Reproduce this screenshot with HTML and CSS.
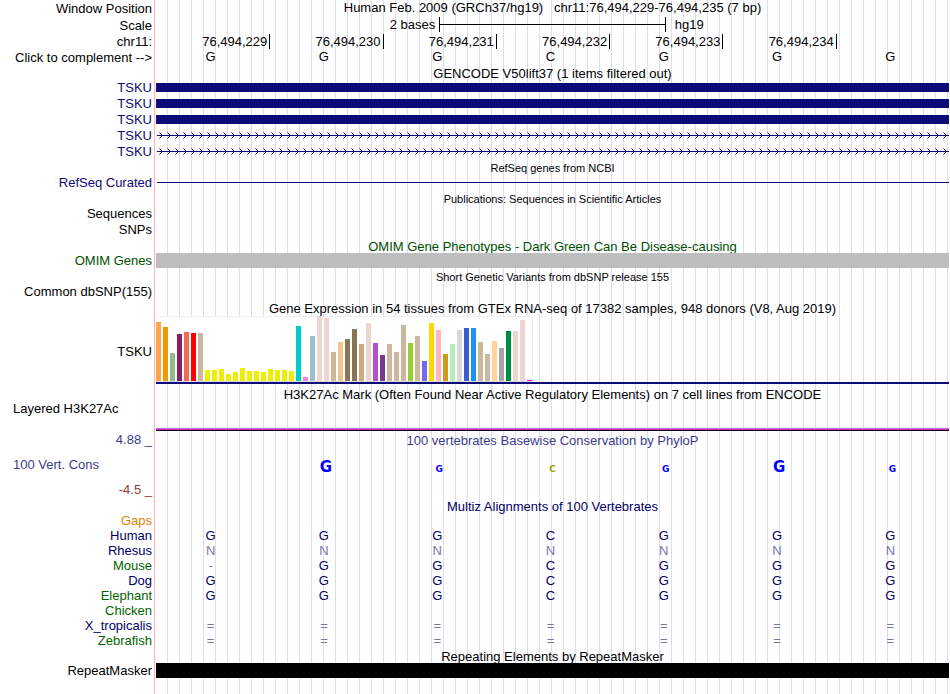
FILE: index.html
```html
<!DOCTYPE html>
<html lang="en">
<head>
    <meta charset="UTF-8">
    <meta name="viewport" content="width=device-width, initial-scale=1.0">
    <title>Human chr11:76,494,229-76,494,235 Genome Browser</title>
    <link rel="stylesheet" href="styles.css">
</head>
<body>
    <main class="browser">
        <div class="track tall nudged">
            <div class="label">Window Position</div>
            <div class="position">Human Feb. 2009 (GRCh37/hg19) &nbsp; chr11:76,494,229-76,494,235 (7 bp)</div>
        </div>
        <div class="track tall nudged">
            <div class="label">Scale</div>
            <div class="scale">
                <span class="scale-size">2 bases</span>
                <span class="scale-bar"><span class="scale-line"></span></span>
                <span class="scale-db">hg19</span>
            </div>
        </div>
        <div class="track">
            <div class="label">chr11:</div>
            <div class="ruler">
                <span>76,494,229</span>
                <span>76,494,230</span>
                <span>76,494,231</span>
                <span>76,494,232</span>
                <span>76,494,233</span>
                <span>76,494,234</span>
                <span></span>
            </div>
        </div>
        <div class="track medium nudged">
            <div class="label">Click to complement --&gt;</div>
            <div class="bases">
                <span>G</span><span>G</span><span>G</span><span>C</span><span>G</span><span>G</span><span>G</span>
            </div>
        </div>

        <!-- GENCODE -->
        <h2 class="title">GENCODE V50lift37 (1 items filtered out)</h2>
        <div class="track medium navy">
            <div class="label">TSKU</div>
            <div class="exon"></div>
        </div>
        <div class="track medium navy">
            <div class="label">TSKU</div>
            <div class="exon"></div>
        </div>
        <div class="track medium navy">
            <div class="label">TSKU</div>
            <div class="exon"></div>
        </div>
        <div class="track medium navy">
            <div class="label">TSKU</div>
            <svg class="intron" aria-hidden="true">
                <defs>
                    <pattern id="chevrons" x="3" y="4" width="8" height="7" patternUnits="userSpaceOnUse">
                        <path d="M0 0h1v1h-1z M0 6h1v1h-1z" fill="#0c0c78" opacity=".5"/>
                        <path d="M1 1h1v1h-1z M2 2h1v1h-1z M2 4h1v1h-1z M1 5h1v1h-1z M3 3h1v1h-1z" fill="#0c0c78"/>
                    </pattern>
                </defs>
                <rect x="1" y="4" width="100%" height="7" fill="url(#chevrons)"/>
                <rect x="1" y="7" width="100%" height="1" fill="#0c0c78"/>
            </svg>
        </div>
        <div class="track medium navy">
            <div class="label">TSKU</div>
            <svg class="intron" aria-hidden="true">
                <rect x="1" y="4" width="100%" height="7" fill="url(#chevrons)"/>
                <rect x="1" y="7" width="100%" height="1" fill="#0c0c78"/>
            </svg>
        </div>

        <!-- RefSeq, publications, OMIM, dbSNP -->
        <h2 class="title small">RefSeq genes from NCBI</h2>
        <div class="track medium navy">
            <div class="label">RefSeq Curated</div>
            <div class="thin-line"></div>
        </div>
        <h2 class="title small">Publications: Sequences in Scientific Articles</h2>
        <div class="track medium">
            <div class="label">Sequences</div>
        </div>
        <div class="track medium">
            <div class="label">SNPs</div>
        </div>
        <h2 class="title omim">OMIM Gene Phenotypes - Dark Green Can Be Disease-causing</h2>
        <div class="track medium omim">
            <div class="label">OMIM Genes</div>
            <div class="block gray"></div>
        </div>
        <h2 class="title small">Short Genetic Variants from dbSNP release 155</h2>
        <div class="track medium">
            <div class="label">Common dbSNP(155)</div>
        </div>

        <!-- GTEx -->
        <h2 class="title">Gene Expression in 54 tissues from GTEx RNA-seq of 17382 samples, 948 donors (V8, Aug 2019)</h2>
        <div class="track gtex">
            <div class="label">TSKU</div>
            <div class="gtex-data">
                <div class="gtex-chart" id="gtex-chart"></div>
            </div>
        </div>

        <h2 class="title spaced">H3K27Ac Mark (Often Found Near Active Regulatory Elements) on 7 cell lines from ENCODE</h2>
        <div class="track histone">
            <div class="label left">Layered H3K27Ac</div>
            <div class="histone-signal"></div>
        </div>

        <!-- Conservation -->
        <div class="track conservation">
            <div class="cons-labels">
                <div class="label">4.88 _</div>
                <div class="label left">100 Vert. Cons</div>
                <div class="label negative">-4.5 _</div>
            </div>
            <div class="cons-data">
                <h2 class="cons-title">100 vertebrates Basewise Conservation by PhyloP</h2>
                <div class="logo">
                    <span></span>
                    <span class="high">G</span>
                    <span class="low">G</span>
                    <span class="low olive">C</span>
                    <span class="low">G</span>
                    <span class="high">G</span>
                    <span class="low">G</span>
                </div>
            </div>
        </div>

        <h2 class="title align-title">Multiz Alignments of 100 Vertebrates</h2>
        <table class="alignment">
            <colgroup><col class="species"><col span="7"></colgroup>
            <tbody>
                <tr class="gaps"><th scope="row">Gaps</th><td></td><td></td><td></td><td></td><td></td><td></td><td></td></tr>
                <tr><th scope="row">Human</th><td>G</td><td>G</td><td>G</td><td>C</td><td>G</td><td>G</td><td>G</td></tr>
                <tr class="faint"><th scope="row">Rhesus</th><td>N</td><td>N</td><td>N</td><td>N</td><td>N</td><td>N</td><td>N</td></tr>
                <tr class="green"><th scope="row">Mouse</th><td class="gap">-</td><td>G</td><td>G</td><td>C</td><td>G</td><td>G</td><td>G</td></tr>
                <tr><th scope="row">Dog</th><td>G</td><td>G</td><td>G</td><td>C</td><td>G</td><td>G</td><td>G</td></tr>
                <tr class="green"><th scope="row">Elephant</th><td>G</td><td>G</td><td>G</td><td>C</td><td>G</td><td>G</td><td>G</td></tr>
                <tr class="green"><th scope="row">Chicken</th><td></td><td></td><td></td><td></td><td></td><td></td><td></td></tr>
                <tr class="faint"><th scope="row">X_tropicalis</th><td>=</td><td>=</td><td>=</td><td>=</td><td>=</td><td>=</td><td>=</td></tr>
                <tr class="green faint"><th scope="row">Zebrafish</th><td>=</td><td>=</td><td>=</td><td>=</td><td>=</td><td>=</td><td>=</td></tr>
            </tbody>
        </table>

        <h2 class="title">Repeating Elements by RepeatMasker</h2>
        <div class="track">
            <div class="label">RepeatMasker</div>
            <div class="block black"></div>
        </div>
    </main>

    <script>
        // [bar height in px, tissue color]
        const tissues = [
            [59, '#ffa54f'], [54, '#ee9a00'], [28, '#8fbc8f'], [47, '#8b1c62'], [49, '#ee6a50'], [48, '#ff0000'],
            [48, '#cdb79e'], [11, '#eeee00'], [11, '#eeee00'], [12, '#eeee00'], [7, '#eeee00'], [9, '#eeee00'],
            [13, '#eeee00'], [10, '#eeee00'], [10, '#eeee00'], [9, '#eeee00'], [12, '#eeee00'], [11, '#eeee00'],
            [11, '#eeee00'], [10, '#eeee00'], [55, '#00cdcd'], [4, '#ee82ee'], [45, '#9ac0cd'], [65, '#eed5d2'],
            [63, '#eed5d2'], [29, '#cdb79e'], [39, '#eec591'], [42, '#8b7355'], [52, '#8b7355'], [37, '#cdaa7d'],
            [58, '#eed5d2'], [38, '#b452cd'], [26, '#7a378b'], [37, '#cdb79e'], [29, '#cdb79e'], [56, '#cdb79e'],
            [38, '#9acd32'], [45, '#cdb79e'], [20, '#7a67ee'], [58, '#ffd700'], [51, '#ffb6c1'], [27, '#cd9b1d'],
            [37, '#b4eeb4'], [51, '#d9d9d9'], [53, '#3a5fcd'], [53, '#1e90ff'], [39, '#cdb79e'], [27, '#cdb79e'],
            [40, '#ffd39b'], [33, '#a6a6a6'], [50, '#008b45'], [50, '#eed5d2'], [61, '#eed5d2'], [1, '#ff00ff']
        ];
        const chart = document.getElementById('gtex-chart');

        tissues.forEach(([height, color]) => {
            const bar = document.createElement('span');
            bar.className = 'gtex-bar';
            bar.style.height = height + 'px';
            bar.style.backgroundColor = color;
            chart.appendChild(bar);
        });
    </script>
</body>
</html>
```

FILE: styles.css
```css
* {
    box-sizing: border-box;
}

body {
    margin: 0;
    background-color: #fff;
    color: #000;
    font-family: "Liberation Sans", Arial, Helvetica, sans-serif;
    font-size: 13px;
    line-height: 15px;
}

/* red divider, blank label column, then a guide line every 12px */
.browser {
    min-height: 100vh;
    margin-right: 1px;
    background:
        linear-gradient(#ffb4b4, #ffb4b4) 154px 0 / 1px 100% no-repeat,
        linear-gradient(#fff, #fff) 0 0 / 156px 100% no-repeat,
        linear-gradient(to right, #dcdcf8 1px, transparent 1px) 167px 0 / 12px 100% repeat-x;
}

.track {
    display: grid;
    grid-template-columns: 154px 1fr;
    column-gap: 2px;
    height: 15px;
}

.track.medium { height: 16px; }
.track.tall { height: 17px; }

.label {
    padding-right: 2px;
    text-align: right;
    white-space: nowrap;
}

.label.left {
    padding-left: 13px;
    text-align: left;
}

.nudged .label { padding-top: 1px; }

.title {
    height: 15px;
    margin: 0 0 0 156px;
    font-size: 13px;
    font-weight: normal;
    line-height: 17px;
    text-align: center;
    white-space: nowrap;
}

.title.small { font-size: 11px; }
.title.spaced { margin-top: 2px; }

.navy { color: #0c0c78; }
.omim { color: #005000; }

.position {
    text-align: center;
}

.scale {
    display: grid;
    grid-template-columns: 5fr 4fr 5fr;
}

.scale-size {
    padding-right: 4px;
    text-align: right;
}

.scale-bar {
    height: 15px;
    padding-top: 7px;
    border-left: 1px solid #000;
    border-right: 1px solid #000;
}

.scale-line {
    display: block;
    height: 1px;
    background-color: #000;
}

.scale-db { padding-left: 9px; }

.ruler,
.bases,
.logo {
    display: grid;
    grid-template-columns: repeat(7, 1fr);
}

.ruler span {
    padding-right: 2px;
    text-align: right;
}

.ruler span + span { border-left: 1px solid #000; }

.bases span {
    padding-right: 4px;
    text-align: center;
}

.exon {
    height: 9px;
    margin-top: 3px;
    background-color: #0c0c78;
}

.intron {
    display: block;
    width: 100%;
    height: 16px;
}

.thin-line {
    height: 1px;
    margin: 7px 0 0 1px;
    background-color: #0c0c78;
}

.block { height: 15px; }
.block.gray { background-color: #bebebe; }
.block.black { background-color: #000; }

.track.gtex {
    height: 69px;
    padding-top: 1px;
}

.gtex .label {
    align-self: center;
    padding-top: 2px;
}

.gtex-data { border-bottom: 2px solid #0c0c78; }

.gtex-chart {
    display: flex;
    align-items: flex-end;
    gap: 2px;
    width: fit-content;
    height: 66px;
    padding-right: 1px;
    background-color: #fff;
    box-shadow: inset 0 1px #f0f0f0, inset -1px 0 #f0f0f0;
    border-bottom: 1px solid #dcdcdc;
}

.gtex-bar { width: 5px; }

.track.histone { height: 30px; }

.histone-signal {
    height: 3px;
    margin-top: 27px;
    background: linear-gradient(#c864f0 1px, #c83296 1px 2px, #140028 2px);
}

.track.conservation {
    height: 66px;
    margin-top: 1px;
    color: #3c3c8c;
}

.cons-labels {
    display: flex;
    flex-direction: column;
    gap: 10px;
}

.negative { color: #8c3c3c; }

.cons-title {
    margin: 0;
    font-size: 13px;
    font-weight: normal;
    line-height: 17px;
    text-align: center;
}

/* letter size follows the conservation score */
.logo {
    margin-top: 7px;
    align-items: baseline;
    color: #0000ff;
    font-family: "DejaVu Sans", sans-serif;
    font-weight: bold;
    line-height: 23px;
    text-align: center;
}

.logo .high { font-size: 15px; }
.logo .low { font-size: 9px; }
.logo .olive { color: #a0a000; }

.align-title { color: #000064; }

.alignment {
    width: 100%;
    table-layout: fixed;
    border-collapse: collapse;
    color: #000064;
}

.alignment .species { width: 156px; }

.alignment th,
.alignment td {
    height: 15px;
    padding: 0 4px 0 0;
    font-weight: normal;
    text-align: center;
}

.alignment th { text-align: right; }

.gaps th { color: #e68200; }
.green th { color: #006400; }

.faint td,
.alignment .gap {
    color: #7878aa;
}
```
